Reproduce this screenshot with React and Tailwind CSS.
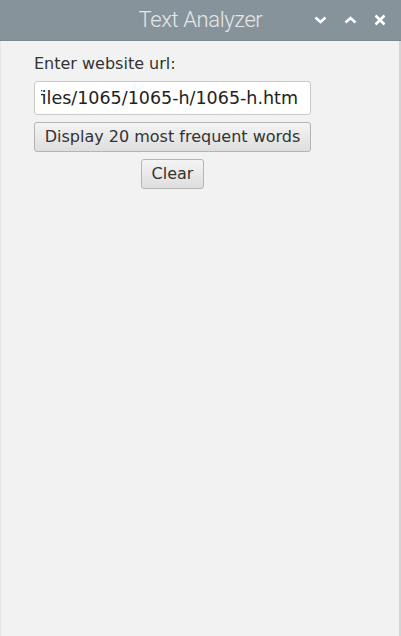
import React from 'react';

const WindowButton = ({ children }) => (
  <div className="w-[22px] h-[22px] flex items-center justify-center">{children}</div>
);

export default function App() {
  return (
    <div className="w-[401px] h-[636px] flex flex-col bg-[#f2f2f2] overflow-hidden" style={{ fontFamily: '"DejaVu Sans", sans-serif' }}>
      {/* Заголовок окна */}
      <div className="h-[41px] shrink-0 bg-[#87939a] border-b border-[#7c878d] grid grid-cols-[1fr_auto_1fr] items-center">
        <div />
        <div className="text-[22px] leading-[28px] font-light tracking-[-0.4px] text-[#e3e7e9] pb-[1px]" style={{ fontFamily: 'Roboto, sans-serif' }}>
          Text Analyzer
        </div>
        <div className="flex items-center justify-end gap-[8px] pr-[10px]">
          <WindowButton>
            <svg width="13" height="10" viewBox="0 0 13 10"><path d="M1.5 2.5 L6.5 7 L11.5 2.5" fill="none" stroke="#fff" strokeWidth="2.6" /></svg>
          </WindowButton>
          <WindowButton>
            <svg width="13" height="10" viewBox="0 0 13 10"><path d="M1.5 7.5 L6.5 3 L11.5 7.5" fill="none" stroke="#fff" strokeWidth="2.6" /></svg>
          </WindowButton>
          <WindowButton>
            <svg width="12" height="12" viewBox="0 0 12 12"><path d="M1.5 1.5 L10.5 10.5 M10.5 1.5 L1.5 10.5" fill="none" stroke="#fff" strokeWidth="2.6" /></svg>
          </WindowButton>
        </div>
      </div>

      {/* Содержимое */}
      <div className="flex-1 border-r-2 border-[#d4d4d4] border-l border-l-[#e6e6e6]">
        <div className="w-[277px] ml-[33px] pt-[13px] flex flex-col">
          <div className="text-[16px] text-[#333] leading-[20px]">Enter website url:</div>
          <div className="mt-[7px] h-[34px] bg-white border border-[#c9c9c9] rounded-[3px] flex items-center pl-[6px] pr-[12px]">
            <div className="flex-1 overflow-hidden flex justify-end">
              <span className="whitespace-nowrap text-[17.5px] text-[#222]">files/1065/1065-h/1065-h.htm</span>
            </div>
          </div>
          <button className="mt-[7px] h-[30px] rounded-[3px] border border-[#b5b5b5] bg-gradient-to-b from-[#f4f4f4] to-[#dedede] text-[16px] text-[#333] whitespace-nowrap">
            Display 20 most frequent words
          </button>
          <div className="mt-[7px] flex justify-center">
            <button className="w-[63px] h-[30px] rounded-[3px] border border-[#b5b5b5] bg-gradient-to-b from-[#f4f4f4] to-[#dedede] text-[16px] text-[#333]">
              Clear
            </button>
          </div>
        </div>
      </div>
    </div>
  );
}
